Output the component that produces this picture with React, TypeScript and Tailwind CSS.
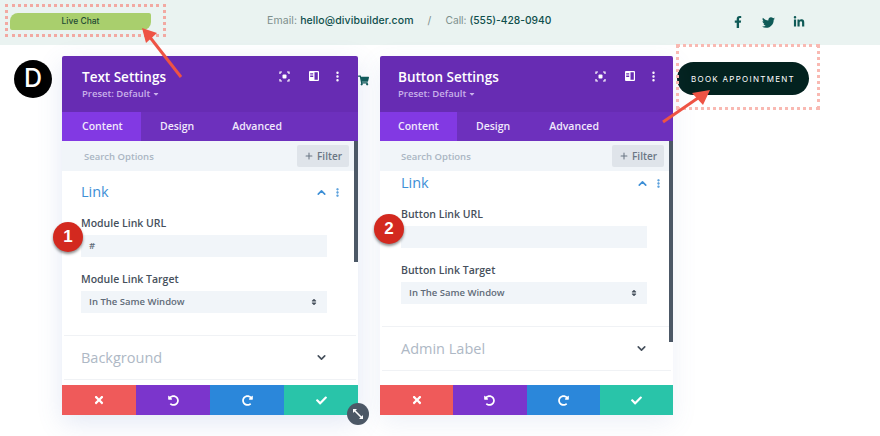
import { ChevronDown, ChevronUp, EllipsisVertical, Plus } from "lucide-react";
import {
  FaCaretDown,
  FaCheck,
  FaFacebookF,
  FaLinkedinIn,
  FaRedoAlt,
  FaShoppingCart,
  FaSort,
  FaTimes,
  FaTwitter,
  FaUndoAlt,
} from "react-icons/fa";

function FocusIcon() {
  return (
    <svg width="11" height="11" viewBox="0 0 11 11" fill="none" stroke="#fff" strokeWidth="1.2">
      <path d="M1 3V1h2M8 1h2v2M10 8v2H8M3 10H1V8" />
      <rect x="3.5" y="3.5" width="4" height="4" rx="1" fill="#fff" stroke="none" />
    </svg>
  );
}

function SplitIcon() {
  return (
    <svg width="10" height="10" viewBox="0 0 10 10" fill="#fff">
      <path d="M0 1a1 1 0 0 1 1-1h8a1 1 0 0 1 1 1v8a1 1 0 0 1-1 1H1a1 1 0 0 1-1-1V1zm5.5.2v7.6h3.3V1.2H5.5zM1.2 2.2v1.4h3V2.2h-3zm0 2.4v1.4h3V4.6h-3z" />
    </svg>
  );
}

function Field({ label, children }: { label: string; children: React.ReactNode }) {
  return (
    <div>
      <div className="text-[10.5px] leading-[15px] font-semibold text-[#46505c]">{label}</div>
      <div className="mt-[4px] h-[22px] w-[246px] bg-[#f1f5f9] pl-[8px] pr-[9px] flex items-center justify-between text-[9.5px] font-semibold text-[#5f6b78]">
        {children}
      </div>
    </div>
  );
}

function Panel(props: {
  title: string;
  width: string;
  contentTab: string;
  design: string;
  advanced: string;
  searchPad: string;
  bodyPad: string;
  linkPad: string;
  linkRight: string;
  rowPad: string;
  linkTop: string;
  urlLabel: string;
  urlValue: string;
  targetLabel: string;
  collapsed: string;
  barHeight: string;
  shadow: string;
  iconRow: string;
}) {
  return (
    <div className={`relative h-[359px] flex flex-col bg-white font-['Open_Sans',sans-serif] ${props.width} ${props.shadow}`}>
      <div className={`h-[56px] shrink-0 bg-[#672cb3] rounded-t-[2px] flex justify-between ${props.searchPad}`}>
        <div>
          <div className="mt-[12px] text-[13.5px] leading-[18px] font-semibold text-white">{props.title}</div>
          <div className="mt-[1px] flex items-center gap-[2px] text-[9.5px] leading-[14px] font-semibold text-[#c9b1ea]">
            Preset: Default <FaCaretDown size={8} />
          </div>
        </div>
        <div className={`flex items-center h-[40px] ${props.iconRow}`}>
          <FocusIcon />
          <span className="ml-[19px]"><SplitIcon /></span>
          <span className="ml-[12px]"><EllipsisVertical size={13} color="#fff" strokeWidth={2.5} /></span>
        </div>
      </div>
      <div className="h-[29px] shrink-0 bg-[#6d30bd] flex text-[10.5px] font-semibold text-[#f1e8fc] leading-[29px]">
        <div className={`bg-[#8239e3] ${props.contentTab} ${props.searchPad}`}>Content</div>
        <div className={props.design}>Design</div>
        <div className={props.advanced}>Advanced</div>
      </div>
      <div className={`h-[30px] shrink-0 bg-[#f1f5f9] flex items-center justify-between pr-[9px] text-[9.5px] font-semibold text-[#aab5c3] ${props.bodyPad}`}>
        <span className="pt-[2px]">Search Options</span>
        <span className="h-[22px] w-[52px] bg-[#dfe4ea] rounded-[2px] flex items-center justify-center gap-[3px] text-[#6a7684] text-[10px]">
          <Plus size={10} strokeWidth={2.5} />
          Filter
        </span>
      </div>
      <div className={`flex-1 min-h-0 ${props.linkTop}`}>
        <div className={props.linkPad}>
          <div className={`flex items-center justify-between ${props.linkRight}`}>
            <span className="text-[14.5px] leading-[20px] text-[#3d8fd6]">Link</span>
            <span className="flex items-center gap-[4px] text-[#3d8fd6]">
              <ChevronUp size={13} strokeWidth={3} />
              <EllipsisVertical size={11} strokeWidth={3} />
            </span>
          </div>
          <div className="mt-[14px]">
            <Field label={props.urlLabel}>
              <span>{props.urlValue}</span>
            </Field>
          </div>
          <div className="mt-[15px]">
            <Field label={props.targetLabel}>
              <span>In The Same Window</span>
              <FaSort size={8} color="#46505c" />
            </Field>
          </div>
        </div>
        <div className={`mt-[22px] mx-[2px] border-t border-b border-[#f0f2f5] h-[45px] flex items-center justify-between ${props.rowPad}`}>
          <span className="text-[14.5px] text-[#aeb8c5]">{props.collapsed}</span>
          <ChevronDown size={13} strokeWidth={3} color="#46505c" />
        </div>
      </div>
      <div className="h-[30px] shrink-0 grid grid-cols-4 text-white">
        <div className="bg-[#ef5a5a] flex items-center justify-center"><FaTimes size={12} /></div>
        <div className="bg-[#7b35cc] flex items-center justify-center"><FaUndoAlt size={11} /></div>
        <div className="bg-[#2b87da] flex items-center justify-center"><FaRedoAlt size={11} /></div>
        <div className="bg-[#29c4a9] flex items-center justify-center"><FaCheck size={11} /></div>
      </div>
      <div className={`absolute right-0 top-[85px] w-[4px] bg-[#4c5866] ${props.barHeight}`} />
    </div>
  );
}

function Badge({ n, className }: { n: number; className: string }) {
  return (
    <div className={`absolute w-[30px] h-[30px] rounded-full bg-[#d3291f] shadow-[0_2px_3px_rgba(0,0,0,0.45)] flex items-center justify-center text-white text-[17px] font-bold font-['Liberation_Sans',sans-serif] ${className}`}>
      {n}
    </div>
  );
}

export default function App() {
  return (
    <div className="relative w-[880px] h-[436px] overflow-hidden bg-white">
      <header className="h-[45px] bg-[#eaf3f1] flex items-center font-['Inter',sans-serif] text-[10.5px] text-[#7d8f8c]">
        <div className="ml-[10px] mb-[3px] w-[141px] h-[17px] bg-[#a9cf6d] rounded-tl-[8px] rounded-br-[8px] rounded-tr-[2px] rounded-bl-[2px] flex items-center justify-center text-[8.5px] text-[#1f4a33] font-medium">
          Live Chat
        </div>
        <div className="ml-[116px] mb-[3px] flex items-center">
          <span className="tracking-[0.1px]">Email:&nbsp;</span>
          <span className="font-medium text-[#0f4f4c] tracking-[0.1px]">hello@divibuilder.com</span>
          <span className="mx-[14px]">/</span>
          <span className="text-[10.25px]">Call:&nbsp;</span>
          <span className="font-medium text-[#0f4f4c] text-[10.25px]">(555)-428-0940</span>
        </div>
        <div className="ml-[181px] mb-[1px] flex items-center gap-[18px] text-[#0f5a57]">
          <FaFacebookF size={12} />
          <FaTwitter size={13} />
          <FaLinkedinIn size={12} />
        </div>
      </header>

      <main className="flex items-start pt-[11px]">
        <div className="ml-[14px] mt-[4px] w-[38px] h-[38px] shrink-0 rounded-full bg-black flex items-center justify-center text-white text-[25px] font-medium font-['Inter',sans-serif]">
          D
        </div>
        <div className="ml-[10px] shrink-0">
          <Panel
            title="Text Settings"
            width="w-[296px]"
            contentTab="w-[79px]"
            design="ml-[19px]"
            advanced="ml-[38px]"
            searchPad="pl-[20px]"
            bodyPad="pl-[22px]"
            linkPad="pl-[19px]"
            linkRight="pr-[15px]"
            rowPad="pl-[17px] pr-[28px]"
            linkTop="pt-[11px]"
            urlLabel="Module Link URL"
            urlValue="#"
            targetLabel="Module Link Target"
            collapsed="Background"
            barHeight="h-[121px]"
            shadow="shadow-[0_8px_24px_rgba(90,120,190,0.16)]"
            iconRow="pr-[14px]"
          />
        </div>
        <div className="w-[22px] shrink-0 pt-[19px] text-[#0f5a57]">
          <FaShoppingCart size={11} />
        </div>
        <div className="shrink-0">
          <Panel
            title="Button Settings"
            width="w-[293px]"
            contentTab="w-[77px]"
            design="ml-[19px]"
            advanced="ml-[39px]"
            searchPad="pl-[18px]"
            bodyPad="pl-[21px]"
            linkPad="pl-[21px]"
            linkRight="pr-[9px]"
            rowPad="pl-[19px] pr-[23px]"
            linkTop="pt-[2px]"
            urlLabel="Button Link URL"
            urlValue=""
            targetLabel="Button Link Target"
            collapsed="Admin Label"
            barHeight="h-[201px]"
            shadow="shadow-[0_8px_24px_rgba(90,120,190,0.10)]"
            iconRow="pr-[13px]"
          />
        </div>
        <div className="ml-[4px] mt-[6px] w-[132px] h-[33px] shrink-0 rounded-full bg-[#03221f] flex items-center justify-center text-white text-[8px] tracking-[0.16em] font-['Inter',sans-serif]">
          BOOK APPOINTMENT
        </div>
      </main>

      <div className="absolute left-[5px] top-[4px] w-[161px] h-[33px] border-[3px] border-dotted border-[#f2a9a2]" />
      <div className="absolute left-[676px] top-[44px] w-[144px] h-[66px] border-[3px] border-dotted border-[#f9b9b2]" />

      <Badge n={1} className="left-[53px] top-[222px]" />
      <Badge n={2} className="left-[374px] top-[214px]" />

      <div className="absolute left-[347px] top-[403px] w-[22px] h-[22px] rounded-full bg-[#4c5866] flex items-center justify-center">
        <svg width="12" height="12" viewBox="0 0 12 12" fill="#fff" stroke="#fff">
          <path d="M2.5 2.5l7 7" strokeWidth="1.6" />
          <path d="M1 1h4L1 5zM11 11H7l4-4z" stroke="none" />
        </svg>
      </div>

      <svg className="absolute left-0 top-0 pointer-events-none" width="880" height="436" fill="none">
        <path d="M181 77 L149 36" stroke="#ee5344" strokeWidth="3" />
        <path d="M142 28 L157 33 L146 43 Z" fill="#ee5344" />
        <path d="M663 122 L698 98" stroke="#ee5344" strokeWidth="3" />
        <path d="M710 90 L692 93 L703 105 Z" fill="#ee5344" />
      </svg>
    </div>
  );
}
